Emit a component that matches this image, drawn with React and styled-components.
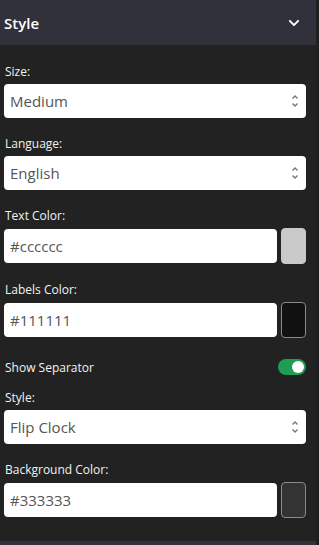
import styled, { createGlobalStyle } from "styled-components";
import { FaChevronDown } from "react-icons/fa";

const GlobalStyle = createGlobalStyle`
  html, body {
    margin: 0;
    padding: 0;
    background: #1f1f1f;
    font-family: "Open Sans", "Liberation Sans", sans-serif;
  }
`;

const Panel = styled.div`
  width: 316px;
  background: #222222;
`;

const Header = styled.div`
  height: 45px;
  background: #30313a;
  display: flex;
  align-items: center;
  justify-content: space-between;
  padding: 0 16px 0 4px;
  box-sizing: border-box;
  color: #fff;
  font-size: 15px;
  font-weight: 600;
`;

const Body = styled.div`
  padding: 18px 10px 6px 4px;
`;

const Field = styled.div`
  margin-bottom: 17px;
`;

const Label = styled.label`
  display: block;
  color: #f2f2f2;
  font-size: 12px;
  line-height: 18px;
  margin: 0 0 3px 1px;
`;

const Control = styled.div`
  position: relative;
  height: 34px;
  background: #fff;
  border-radius: 4px;
  display: flex;
  align-items: center;
  padding: 0 6px;
  color: #555;
  font-size: 15px;
  flex: 1;
`;

const Arrows = styled.svg`
  position: absolute;
  right: 7px;
  top: 10px;
`;

const ColorRow = styled.div`
  display: flex;
  align-items: center;
  gap: 4px;
`;

const Swatch = styled.div`
  width: 25px;
  height: 36px;
  box-sizing: border-box;
  border-radius: 4px;
  background: ${(p) => p.$color};
  border: 1px solid ${(p) => (p.$outline ? "#8a8a8a" : p.$color)};
`;

const ToggleRow = styled.div`
  height: 24px;
  display: flex;
  align-items: center;
  justify-content: space-between;
  color: #f2f2f2;
  font-size: 12px;
  margin: 0 0 10px 1px;
`;

const Toggle = styled.div`
  width: 28px;
  height: 16px;
  border-radius: 8px;
  background: #1f9d55;
  display: flex;
  align-items: center;
  justify-content: flex-end;
  padding: 0 2px;
  box-sizing: border-box;
`;

const Knob = styled.div`
  width: 12px;
  height: 12px;
  border-radius: 50%;
  background: #fff;
`;

const Select = ({ value }) => (
  <Control>
    {value}
    <Arrows width="8" height="14" viewBox="0 0 8 14">
      <path d="M1.5 4.5 L4 2 L6.5 4.5" stroke="#777" strokeWidth="1.4" fill="none" />
      <path d="M1.5 9.5 L4 12 L6.5 9.5" stroke="#777" strokeWidth="1.4" fill="none" />
    </Arrows>
  </Control>
);

const ColorField = ({ label, value, color, outline }) => (
  <Field>
    <Label>{label}</Label>
    <ColorRow>
      <Control>{value}</Control>
      <Swatch $color={color} $outline={outline} />
    </ColorRow>
  </Field>
);

export default function App() {
  return (
    <>
      <GlobalStyle />
      <Panel>
        <Header>
          <span>Style</span>
          <FaChevronDown size={12} />
        </Header>
        <Body>
          <Field>
            <Label>Size:</Label>
            <Select value="Medium" />
          </Field>
          <Field>
            <Label>Language:</Label>
            <Select value="English" />
          </Field>
          <ColorField label="Text Color:" value="#cccccc" color="#c9c9c9" />
          <ColorField label="Labels Color:" value="#111111" color="#111111" outline />
          <ToggleRow>
            <span>Show Separator</span>
            <Toggle>
              <Knob />
            </Toggle>
          </ToggleRow>
          <Field>
            <Label>Style:</Label>
            <Select value="Flip Clock" />
          </Field>
          <ColorField label="Background Color:" value="#333333" color="#333333" outline />
        </Body>
        <Header />
      </Panel>
    </>
  );
}
